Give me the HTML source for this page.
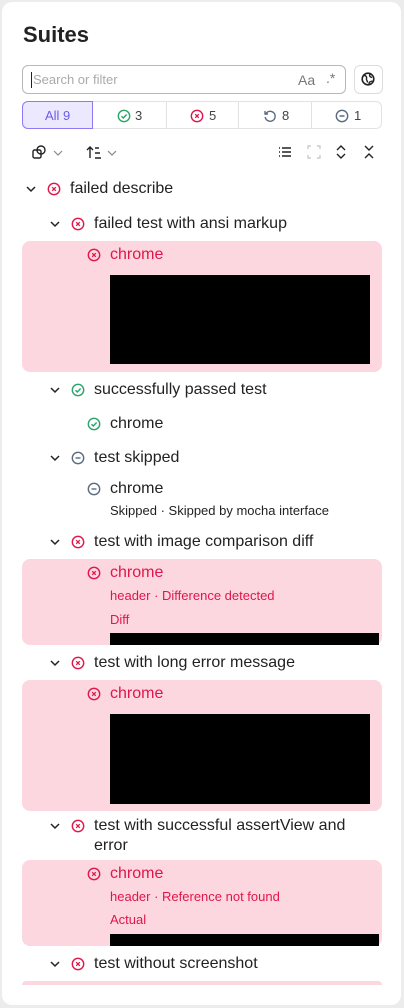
<!DOCTYPE html>
<html><head><style>
*{margin:0;padding:0;box-sizing:border-box}
body{width:404px;height:1008px;background:#ececec;font-family:"Liberation Sans",sans-serif;overflow:hidden;position:relative}
.card{position:absolute;left:2px;top:2px;width:399px;height:1003px;background:#fff;border-radius:10px;overflow:hidden}
.a{position:absolute}
.t{position:absolute;font-size:16px;color:#222;white-space:nowrap;line-height:20px}
.r{color:#e0164a}
.s{position:absolute;font-size:13px;white-space:nowrap;line-height:16px}
.pink{position:absolute;left:20px;width:360px;background:#fdd7df;border-radius:8px}
.blk{position:absolute;background:#000}
svg{position:absolute}
</style></head><body>
<div class="card">
<div class="t" style="left:21px;top:20px;font-size:22px;font-weight:bold;line-height:26px;color:#222">Suites</div>
<div class="a" style="left:20px;top:63px;width:324px;height:29px;border:1px solid #b8b8b8;border-radius:6px"></div>
<div class="a" style="left:29px;top:70px;width:1px;height:16px;background:#222"></div>
<div class="s" style="left:31px;top:70px;color:#aaa">Search or filter</div>
<div class="s" style="left:296px;top:70px;color:#777;font-size:14px">Aa</div>
<div class="s" style="left:324px;top:68px;color:#777;font-size:14px">.*</div>
<div class="a" style="left:352px;top:63px;width:29px;height:29px;border:1px solid #ddd;border-radius:6px"></div>
<svg style="left:359px;top:70px" width="14" height="14" viewBox="0 0 14 14"><circle cx="7" cy="7" r="5.8" fill="none" stroke="#222" stroke-width="1.6"/><path d="M3 3.5c2 0 3 1.5 2.5 3s1 2 1 4M9 2c-1 2 0 3 2 3.5M8 12c0-2 1-2.5 3.5-3" fill="none" stroke="#222" stroke-width="1.4"/></svg>
<div class="a" style="left:20px;top:99px;width:360px;height:28px;border:1px solid #e2e2e2;border-radius:6px"></div>
<div class="a" style="left:20px;top:99px;width:71px;height:28px;border:1px solid #8b7cf6;background:#ece9ff;border-radius:6px 0 0 6px"></div>
<div class="s" style="left:43px;top:106px;color:#6b5ce7">All 9</div>
<div class="a" style="left:164px;top:100px;width:1px;height:26px;background:#e2e2e2"></div>
<div class="a" style="left:236px;top:100px;width:1px;height:26px;background:#e2e2e2"></div>
<div class="a" style="left:309px;top:100px;width:1px;height:26px;background:#e2e2e2"></div>
<svg style="left:115px;top:107px" width="14" height="14"><circle cx="7" cy="7" r="5.7" fill="none" stroke="#2ba36b" stroke-width="1.4"/><path d="M4.5 7.2l1.8 1.8 3.3-3.5" fill="none" stroke="#2ba36b" stroke-width="1.4"/></svg>
<div class="s" style="left:133px;top:106px;color:#444">3</div>
<svg style="left:188px;top:107px" width="14" height="14"><circle cx="7" cy="7" r="5.7" fill="none" stroke="#e0164a" stroke-width="1.4"/><path d="M5.2 5.2l3.6 3.6M8.8 5.2l-3.6 3.6" stroke="#e0164a" stroke-width="1.3"/></svg>
<div class="s" style="left:207px;top:106px;color:#444">5</div>
<svg style="left:261px;top:107px" width="14" height="14"><path d="M3 4.5A5 5 0 1 1 2.2 8" fill="none" stroke="#5a6b80" stroke-width="1.4"/><path d="M2 2v3h3" fill="none" stroke="#5a6b80" stroke-width="1.4"/></svg>
<div class="s" style="left:280px;top:106px;color:#444">8</div>
<svg style="left:333px;top:107px" width="14" height="14"><circle cx="7" cy="7" r="5.7" fill="none" stroke="#5a6b80" stroke-width="1.4"/><path d="M4.5 7h5" stroke="#5a6b80" stroke-width="1.4"/></svg>
<div class="s" style="left:352px;top:106px;color:#444">1</div>
<!-- toolbar -->
<svg style="left:29px;top:142px" width="36" height="16"><rect x="2" y="6" width="8" height="8" rx="1.5" fill="none" stroke="#222" stroke-width="1.4"/><rect x="6" y="2" width="8" height="8" rx="4" fill="none" stroke="#222" stroke-width="1.4"/><path d="M23 7l4 4 4-4" fill="none" stroke="#888" stroke-width="1.2"/></svg>
<svg style="left:84px;top:142px" width="36" height="16"><path d="M4 14V3M1 6l3-3 3 3M9 4h4M9 9h5M9 14h6" fill="none" stroke="#222" stroke-width="1.4"/><path d="M22 7l4 4 4-4" fill="none" stroke="#888" stroke-width="1.2"/></svg>
<svg style="left:276px;top:143px" width="14" height="14"><path d="M1 3h1M1 7h1M1 11h1M4 3h9M4 7h9M4 11h9" stroke="#222" stroke-width="1.5"/></svg>
<svg style="left:305px;top:143px" width="14" height="14"><path d="M1 4V1h3M10 1h3v3M13 10v3h-3M4 13H1v-3" fill="none" stroke="#ccc" stroke-width="1.4"/></svg>
<svg style="left:332px;top:142px" width="14" height="16"><path d="M3 6l4-4 4 4M3 10l4 4 4-4" fill="none" stroke="#222" stroke-width="1.4"/></svg>
<svg style="left:360px;top:142px" width="14" height="16"><path d="M3 2l4 4 4-4M3 14l4-4 4 4" fill="none" stroke="#222" stroke-width="1.4"/></svg>

<!-- tree -->
<svg style="left:23px;top:181px" width="12" height="12"><path d="M2 4l4 4 4-4" fill="none" stroke="#222" stroke-width="1.5"/></svg>
<svg style="left:45px;top:180px" width="14" height="14"><circle cx="7" cy="7" r="5.7" fill="none" stroke="#e0164a" stroke-width="1.4"/><path d="M5.2 5.2l3.6 3.6M8.8 5.2l-3.6 3.6" stroke="#e0164a" stroke-width="1.3"/></svg>
<div class="t" style="left:68px;top:177px">failed describe</div>

<svg style="left:47px;top:216px" width="12" height="12"><path d="M2 4l4 4 4-4" fill="none" stroke="#222" stroke-width="1.5"/></svg>
<svg style="left:69px;top:215px" width="14" height="14"><circle cx="7" cy="7" r="5.7" fill="none" stroke="#e0164a" stroke-width="1.4"/><path d="M5.2 5.2l3.6 3.6M8.8 5.2l-3.6 3.6" stroke="#e0164a" stroke-width="1.3"/></svg>
<div class="t" style="left:92px;top:212px">failed test with ansi markup</div>
<div class="pink" style="top:239px;height:131px"></div>
<svg style="left:85px;top:246px" width="14" height="14"><circle cx="7" cy="7" r="5.7" fill="none" stroke="#e0164a" stroke-width="1.4"/><path d="M5.2 5.2l3.6 3.6M8.8 5.2l-3.6 3.6" stroke="#e0164a" stroke-width="1.3"/></svg>
<div class="t r" style="left:108px;top:243px">chrome</div>
<div class="blk" style="left:108px;top:273px;width:260px;height:89px"></div>

<svg style="left:47px;top:382px" width="12" height="12"><path d="M2 4l4 4 4-4" fill="none" stroke="#222" stroke-width="1.5"/></svg>
<svg style="left:69px;top:381px" width="14" height="14"><circle cx="7" cy="7" r="5.7" fill="none" stroke="#2ba36b" stroke-width="1.4"/><path d="M4.5 7.2l1.8 1.8 3.3-3.5" fill="none" stroke="#2ba36b" stroke-width="1.4"/></svg>
<div class="t" style="left:92px;top:378px">successfully passed test</div>
<svg style="left:85px;top:415px" width="14" height="14"><circle cx="7" cy="7" r="5.7" fill="none" stroke="#2ba36b" stroke-width="1.4"/><path d="M4.5 7.2l1.8 1.8 3.3-3.5" fill="none" stroke="#2ba36b" stroke-width="1.4"/></svg>
<div class="t" style="left:108px;top:412px">chrome</div>

<svg style="left:47px;top:450px" width="12" height="12"><path d="M2 4l4 4 4-4" fill="none" stroke="#222" stroke-width="1.5"/></svg>
<svg style="left:69px;top:449px" width="14" height="14"><circle cx="7" cy="7" r="5.7" fill="none" stroke="#5a6b80" stroke-width="1.4"/><path d="M4.5 7h5" stroke="#5a6b80" stroke-width="1.4"/></svg>
<div class="t" style="left:92px;top:446px">test skipped</div>
<svg style="left:85px;top:480px" width="14" height="14"><circle cx="7" cy="7" r="5.7" fill="none" stroke="#5a6b80" stroke-width="1.4"/><path d="M4.5 7h5" stroke="#5a6b80" stroke-width="1.4"/></svg>
<div class="t" style="left:108px;top:477px">chrome</div>
<div class="s" style="left:108px;top:501px;color:#222">Skipped · Skipped by mocha interface</div>

<svg style="left:47px;top:534px" width="12" height="12"><path d="M2 4l4 4 4-4" fill="none" stroke="#222" stroke-width="1.5"/></svg>
<svg style="left:69px;top:533px" width="14" height="14"><circle cx="7" cy="7" r="5.7" fill="none" stroke="#e0164a" stroke-width="1.4"/><path d="M5.2 5.2l3.6 3.6M8.8 5.2l-3.6 3.6" stroke="#e0164a" stroke-width="1.3"/></svg>
<div class="t" style="left:92px;top:530px">test with image comparison diff</div>
<div class="pink" style="top:557px;height:86px"></div>
<svg style="left:85px;top:564px" width="14" height="14"><circle cx="7" cy="7" r="5.7" fill="none" stroke="#e0164a" stroke-width="1.4"/><path d="M5.2 5.2l3.6 3.6M8.8 5.2l-3.6 3.6" stroke="#e0164a" stroke-width="1.3"/></svg>
<div class="t r" style="left:108px;top:561px">chrome</div>
<div class="s r" style="left:108px;top:586px">header · Difference detected</div>
<div class="s r" style="left:108px;top:610px">Diff</div>
<div class="blk" style="left:108px;top:631px;width:269px;height:12px"></div>

<svg style="left:47px;top:655px" width="12" height="12"><path d="M2 4l4 4 4-4" fill="none" stroke="#222" stroke-width="1.5"/></svg>
<svg style="left:69px;top:654px" width="14" height="14"><circle cx="7" cy="7" r="5.7" fill="none" stroke="#e0164a" stroke-width="1.4"/><path d="M5.2 5.2l3.6 3.6M8.8 5.2l-3.6 3.6" stroke="#e0164a" stroke-width="1.3"/></svg>
<div class="t" style="left:92px;top:651px">test with long error message</div>
<div class="pink" style="top:678px;height:131px"></div>
<svg style="left:85px;top:685px" width="14" height="14"><circle cx="7" cy="7" r="5.7" fill="none" stroke="#e0164a" stroke-width="1.4"/><path d="M5.2 5.2l3.6 3.6M8.8 5.2l-3.6 3.6" stroke="#e0164a" stroke-width="1.3"/></svg>
<div class="t r" style="left:108px;top:682px">chrome</div>
<div class="blk" style="left:108px;top:712px;width:260px;height:90px"></div>

<svg style="left:47px;top:818px" width="12" height="12"><path d="M2 4l4 4 4-4" fill="none" stroke="#222" stroke-width="1.5"/></svg>
<svg style="left:69px;top:817px" width="14" height="14"><circle cx="7" cy="7" r="5.7" fill="none" stroke="#e0164a" stroke-width="1.4"/><path d="M5.2 5.2l3.6 3.6M8.8 5.2l-3.6 3.6" stroke="#e0164a" stroke-width="1.3"/></svg>
<div class="t" style="left:92px;top:814px">test with successful assertView and</div>
<div class="t" style="left:92px;top:834px">error</div>
<div class="pink" style="top:858px;height:86px"></div>
<svg style="left:85px;top:865px" width="14" height="14"><circle cx="7" cy="7" r="5.7" fill="none" stroke="#e0164a" stroke-width="1.4"/><path d="M5.2 5.2l3.6 3.6M8.8 5.2l-3.6 3.6" stroke="#e0164a" stroke-width="1.3"/></svg>
<div class="t r" style="left:108px;top:862px">chrome</div>
<div class="s r" style="left:108px;top:887px">header · Reference not found</div>
<div class="s r" style="left:108px;top:910px">Actual</div>
<div class="blk" style="left:108px;top:932px;width:269px;height:12px"></div>

<svg style="left:47px;top:956px" width="12" height="12"><path d="M2 4l4 4 4-4" fill="none" stroke="#222" stroke-width="1.5"/></svg>
<svg style="left:69px;top:955px" width="14" height="14"><circle cx="7" cy="7" r="5.7" fill="none" stroke="#e0164a" stroke-width="1.4"/><path d="M5.2 5.2l3.6 3.6M8.8 5.2l-3.6 3.6" stroke="#e0164a" stroke-width="1.3"/></svg>
<div class="t" style="left:92px;top:952px">test without screenshot</div>
<div class="pink" style="top:979px;height:4px;border-radius:8px 8px 0 0"></div>
</div>
</body></html>
